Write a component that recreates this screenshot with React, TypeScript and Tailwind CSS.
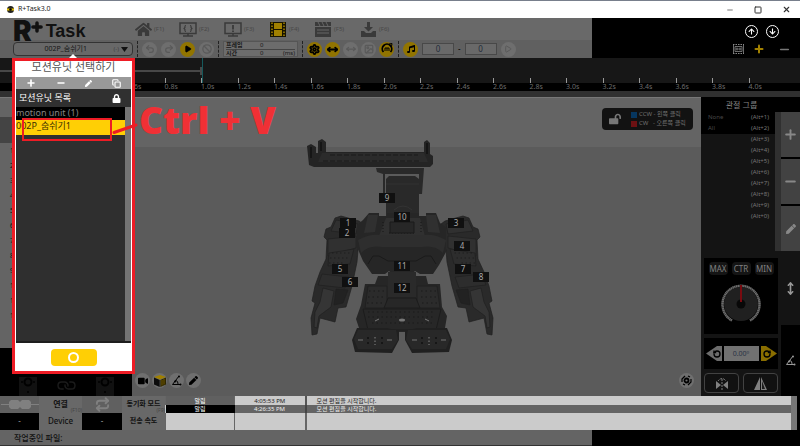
import { clsx } from 'clsx';
import type { ReactNode } from 'react';
import {
  Ban,
  Copy,
  Image as ImageIcon,
  Link as LinkIcon,
  Minus,
  MoveHorizontal,
  MoveVertical,
  Play,
  Plus,
  Redo2,
  Repeat,
  RotateCcw,
  RotateCw,
  Settings,
  Square,
  Undo2,
  X,
} from 'lucide-react';
import { FaArrowDown, FaArrowUp, FaHome, FaLock, FaLockOpen, FaMusic, FaPen, FaVideo } from 'react-icons/fa';

const ticks = [
  '0.6s', '0.8s', '1.0s', '1.2s', '1.4s', '1.6s', '1.8s', '2.0s', '2.2s',
  '2.4s', '2.6s', '2.8s', '3.0s', '3.2s', '3.4s', '3.6s', '3.8s', '4.0s',
];

const joints = [
  { id: 9, pos: 'left-[89px] top-[63px]' },
  { id: 10, pos: 'left-[104px] top-[82px]' },
  { id: 1, pos: 'left-[50px] top-[88px]' },
  { id: 2, pos: 'left-[49px] top-[98px]' },
  { id: 3, pos: 'left-[158px] top-[88px]' },
  { id: 4, pos: 'left-[164px] top-[111px]' },
  { id: 11, pos: 'left-[104px] top-[131px]' },
  { id: 5, pos: 'left-[42px] top-[134px]' },
  { id: 6, pos: 'left-[52px] top-[147px]' },
  { id: 7, pos: 'left-[165px] top-[134px]' },
  { id: 8, pos: 'left-[183px] top-[142px]' },
  { id: 12, pos: 'left-[104px] top-[153px]' },
];

const groups = [
  { name: 'None', keys: '(Alt+1)' },
  { name: 'All', keys: '(Alt+2)' },
  { name: '', keys: '(Alt+3)' },
  { name: '', keys: '(Alt+4)' },
  { name: '', keys: '(Alt+5)' },
  { name: '', keys: '(Alt+6)' },
  { name: '', keys: '(Alt+7)' },
  { name: '', keys: '(Alt+8)' },
  { name: '', keys: '(Alt+9)' },
  { name: '', keys: '(Alt+0)' },
];

function MonitorIcon({ mark }: { mark: 'code' | 'alert' }) {
  return (
    <svg width="18" height="15" viewBox="0 0 18 15" fill="none" stroke="#3a3a3a" strokeWidth="1.5">
      <rect x="1" y="1" width="16" height="10.5" />
      <path d="M9 11.5v2M4 14h10" />
      {mark === 'code' ? (
        <path d="M7 3.5c-1.5 0-1 1.5-1 2l-1 1 1 1c0 .5-.5 2 1 2M11 3.5c1.5 0 1 1.5 1 2l1 1-1 1c0 .5.5 2-1 2" strokeWidth="1.1" />
      ) : (
        <path d="M9 3v4.5M9 8.5v1.6" strokeWidth="1.8" />
      )}
    </svg>
  );
}

function FilmIcon() {
  return (
    <svg width="16" height="15" viewBox="0 0 16 15">
      <path d="M0 0h16v15H0z" fill="#161300" />
      <path d="M4 1h8v6H4zM4 8h8v6H4z" fill="#a08000" />
      <path d="M2 .5v14M14 .5v14" stroke="#a08000" strokeWidth="1.6" strokeDasharray="1.6 1.4" />
    </svg>
  );
}

function ClapIcon() {
  return (
    <svg width="16" height="15" viewBox="0 0 16 15">
      <path d="M0 5h16v10H0zM0 0h16v4H0z" fill="#3a3a3a" />
      <path d="M3 0l2 4M7 0l2 4M11 0l2 4M2 8h12M2 11h12" stroke="#666" strokeWidth="1" />
    </svg>
  );
}

function SaveIcon() {
  return (
    <svg width="15" height="15" viewBox="0 0 15 15" fill="#3a3a3a">
      <path d="M6 0h3v5h3L7.500 9.500 3 5h3zM0 9h3l2 2h5l2-2h3v6H0z" />
    </svg>
  );
}

function CubeIcon() {
  return (
    <svg width="12" height="12" viewBox="0 0 12 12">
      <path d="M6 0l6 2-6 2.500L0 2z" fill="#a08000" />
      <path d="M0 2.500L5.700 5v7L0 9.500z" fill="#0c0c0c" />
      <path d="M12 2.500L6.300 5v7L12 9.500z" fill="#2e2600" />
      <path d="M8 5v5.500M10 4v5.500" stroke="#8a6e00" strokeWidth=".7" />
    </svg>
  );
}

function AngleIcon({ className }: { className?: string }) {
  return (
    <svg className={className} width="11" height="11" viewBox="0 0 11 11" fill="none" stroke="currentColor">
      <path d="M8 1L1.500 9.500H10M5 5.500c1.500.5 2 2 2 4" />
      <circle cx="9.500" cy="9.500" r="1" fill="currentColor" stroke="none" />
      <circle cx="4" cy="6.500" r="1" fill="currentColor" stroke="none" />
      <circle cx="8" cy="1.500" r="1" fill="currentColor" stroke="none" />
    </svg>
  );
}

function ServoIcon() {
  return (
    <svg width="18" height="20" viewBox="0 0 18 20" fill="none" stroke="#000">
      <path d="M0 1h18v19H0z" fill="#111" stroke="none" />
      <circle cx="9" cy="6" r="3.500" strokeWidth="2" />
      <path d="M2 6h2M14 6h2M9 15v2" strokeWidth="1.500" />
    </svg>
  );
}

function RoundButton({ label, tone, children }: { label: string; tone: 'on' | 'off' | 'view'; children: ReactNode }) {
  return (
    <button
      aria-label={label}
      className={clsx('flex size-[15px] shrink-0 items-center justify-center rounded-full', {
        'bg-[#917400] text-black': tone === 'on',
        'bg-[#6e6e6e] text-[#5a5a5a]': tone === 'off',
        'bg-[#6f6f6f] text-black': tone === 'view',
      })}
    >
      {children}
    </button>
  );
}

function Dots() {
  return <span className="h-4 shrink-0 border-l border-dashed border-[#222]" />;
}

function TitleBar() {
  return (
    <header className="flex h-[18px] items-center border-t border-[#787f8c] bg-white px-[7px] text-[7px] text-[#222]">
      <svg width="7" height="7" viewBox="0 0 7 7">
        <circle cx="3.500" cy="3.500" r="3.500" fill="#222" />
        <path d="M0 3.500h7" stroke="#e6c200" strokeWidth="2" />
        <circle cx="3.500" cy="3.500" r="1.300" fill="#000" />
      </svg>
      <span className="ml-1">R+Task3.0</span>
      <div className="ml-auto flex items-center gap-5 pr-0.5 text-[#333]">
        <button aria-label="Minimize"><Minus size={8} strokeWidth={2} /></button>
        <button aria-label="Maximize"><Square size={8} strokeWidth={3} /></button>
        <button aria-label="Close"><X size={9} strokeWidth={3} /></button>
      </div>
    </header>
  );
}

function ModeButton({ hint, children }: { hint: string; children: ReactNode }) {
  return (
    <button className="flex w-[45px] items-center gap-0.5 text-[6px] text-[#484848]">
      <span className="flex w-[18px] justify-center">{children}</span>
      {hint}
    </button>
  );
}

function Toolbar() {
  return (
    <div className="flex">
      <div className="min-w-0 flex-1">
        <div className="flex h-[22px] items-center bg-[#696969]">
          <div className="flex w-[134px] items-center pt-1 pl-[13px] leading-none text-[#111]">
            <span className="font-[Inter] text-[28px] leading-5 font-black">R</span>
            <Plus className="-mt-2 -ml-0.5 shrink-0" size={14} strokeWidth={6} />
            <span className="ml-0.5 font-['Liberation_Sans'] text-[18px] font-bold">Task</span>
          </div>
          <nav className="flex">
            <ModeButton hint="(F1)"><FaHome size={17} color="#3a3a3a" /></ModeButton>
            <ModeButton hint="(F2)"><MonitorIcon mark="code" /></ModeButton>
            <ModeButton hint="(F3)"><MonitorIcon mark="alert" /></ModeButton>
            <ModeButton hint="(F4)"><FilmIcon /></ModeButton>
            <ModeButton hint="(F5)"><ClapIcon /></ModeButton>
            <ModeButton hint="(F6)"><SaveIcon /></ModeButton>
          </nav>
        </div>
        <div className="flex h-[18px] items-center gap-1 bg-[#606060] pl-[13px]">
          <button className="flex h-[14px] w-[120px] shrink-0 items-center rounded-sm border border-[#333] bg-[#686868] px-1 text-[7px] text-[#161616]">
            <span className="flex-1">002P_숨쉬기1</span>
            <span className="text-[6px] text-[#444]">(-)</span>
            <svg className="ml-0.5" width="7" height="5" viewBox="0 0 7 5"><path d="M0 0h7L3.500 5z" fill="#111" /></svg>
          </button>
          <Dots />
          <RoundButton label="Undo" tone="off"><Undo2 size={10} strokeWidth={3} /></RoundButton>
          <RoundButton label="Redo" tone="off"><Redo2 size={10} strokeWidth={3} /></RoundButton>
          <RoundButton label="Play" tone="on"><Play size={8} fill="black" /></RoundButton>
          <RoundButton label="Stop" tone="off"><Ban size={10} strokeWidth={3} /></RoundButton>
          <Dots />
          <dl className="grid h-4 w-[75px] shrink-0 grid-cols-[34px_1fr_auto] border border-[#555] bg-[#6c6c6c] px-0.5 text-[6px] leading-[7px] text-[#181818]">
            <dt className="font-bold">프레임</dt>
            <dd>0</dd>
            <dd />
            <dt className="border-t border-[#444] font-bold">시간</dt>
            <dd className="border-t border-[#444]">0</dd>
            <dd className="border-t border-[#444]">(ms)</dd>
          </dl>
          <Dots />
          <div className="flex gap-[3px]">
            <RoundButton label="Settings" tone="on"><Settings size={11} strokeWidth={4} /></RoundButton>
            <RoundButton label="Fit" tone="on"><MoveHorizontal size={11} strokeWidth={4} /></RoundButton>
            <RoundButton label="Mirror" tone="off"><MoveHorizontal size={10} strokeWidth={3} /></RoundButton>
            <RoundButton label="Picture" tone="off"><ImageIcon size={10} strokeWidth={3} /></RoundButton>
            <RoundButton label="Loop" tone="on">
              <svg width="12" height="12" viewBox="0 0 12 12" fill="none" stroke="black">
                <path d="M2.500 9A4.700 4.700 0 1 1 9.500 9" strokeWidth="1.800" />
                <path d="M8 1l3-.5-.5 3zM4 5v3M6 5v3M8 5v3M4 5h4" />
              </svg>
            </RoundButton>
          </div>
          <Dots />
          <RoundButton label="Music" tone="on"><FaMusic size={8} /></RoundButton>
          <input aria-label="Start" defaultValue="0" className="h-3 w-8 border border-[#484848] bg-[#696969] text-center text-[8px] text-[#222c3a]" />
          <span className="text-[8px] leading-none text-black">-</span>
          <input aria-label="End" defaultValue="0" className="h-3 w-8 border border-[#484848] bg-[#696969] text-center text-[8px] text-[#222c3a]" />
          <RoundButton label="Play music" tone="off"><Play size={8} strokeWidth={3} /></RoundButton>
        </div>
      </div>
      <div className="flex w-[208px] flex-col items-end justify-around bg-black pr-[9px]">
        <div className="flex gap-2 pr-3 pt-1 text-white">
          <button aria-label="Upload" className="flex size-[13px] items-center justify-center rounded-full border border-white"><FaArrowUp size={7} /></button>
          <button aria-label="Download" className="flex size-[13px] items-center justify-center rounded-full border border-white"><FaArrowDown size={7} /></button>
        </div>
        <div className="flex items-center gap-[9px]">
          <button aria-label="Frames">
            <svg width="11" height="10" viewBox="0 0 11 10" fill="none" stroke="#888">
              <path d="M0 .5h11M0 9.500h11" strokeDasharray="1.500 1" />
              <path d="M.5 0v10M10.500 0v10M2 2.500h7v5H2z" strokeWidth=".8" />
              <circle cx="4" cy="5" r="1" strokeWidth=".8" />
              <circle cx="7" cy="5" r="1" strokeWidth=".8" />
            </svg>
          </button>
          <button aria-label="Zoom in"><Plus size={12} strokeWidth={4} color="#a38200" /></button>
          <button aria-label="Zoom out" className="ml-1"><Minus size={13} strokeWidth={3} color="#777" /></button>
        </div>
      </div>
    </div>
  );
}

function Timeline() {
  return (
    <div className="border-b-[6px] border-[#303030] bg-black">
      <div className="flex h-[25px] bg-[#171717]">
        <div className="flex w-[203px] items-center border-r border-[#16595c]">
          <span className="h-0.5 flex-1 bg-[#484848]" />
          <span className="h-2 w-0.5 bg-[#484848]" />
        </div>
      </div>
      <ol className="-mt-[5px] flex pr-[15px] pl-[128px] text-[7px] leading-[8px] text-[#6c6c6c]">
        {ticks.map((tick) => (
          <li key={tick} className="flex-1">
            <span className="block h-[5px] w-px bg-[#999]" />
            {tick}
          </li>
        ))}
      </ol>
    </div>
  );
}

function Arm() {
  return (
    <g stroke="#202020" strokeWidth=".7">
      <path d="M335 218l6-2 18 5 4 3v14l-5 12-1 12-5 24-6 21-8 1-3 14-15-4-3 16-5 1-1-17 4-15-3-2 3-15 5-14 6-13 1-19-3-3 2-8 5-2z" fill="#2a2a2a" />
      <path d="M336 220l22 4-2 10-25-3zM328 239l28-3v12l-28 8z" fill="#303030" />
      <path d="M329 253l25-4-4 15-22 2zM322 274l27 3-4 11-27-3z" fill="#2d2d2d" />
      <path d="M323 288l11 3-3 16-12 9-2 12-3-1 1-15 5-10z" fill="#353535" />
      <path d="M336 289l12 1-5 13-9 2z" fill="#222" />
      <path d="M332 253h18M330 258h18M329 263h14" stroke="#181818" strokeDasharray="1.500 2.500" />
    </g>
  );
}

function Foot() {
  return (
    <g>
      <path d="M357 328l-5 12 3 12 37 1 7-13v-9l-12-3z" fill="#202020" />
      <path d="M354 339l4-9h38l2 10-6 9H358z" fill="#282828" />
      <path d="M358 340h5M387 340h5" stroke="#747474" />
      <path d="M368 337v8M382 337v7" stroke="#161616" strokeWidth="2" strokeDasharray="2 3" />
      <path d="M375 337v8" stroke="#858585" strokeDasharray="1.500 2" />
    </g>
  );
}

function Robot() {
  return (
    <svg width="220" height="230" viewBox="290 130 220 230">
      {/* phone tray */}
      <path d="M307 146l4-2 5 3v6h2v-12l4-2 4 3v10h98v-10l3-2 3 3v11l3 2v8l-3 3H314l-5-2z" fill="#242424" />
      <path d="M322 153h102l4 9H318z" fill="#2b2b2b" />
      <path d="M330 155h88M323 161h96" stroke="#1b1b1b" strokeDasharray="5 2" />
      <path d="M311 147v11M321 142v9M427 143v11" stroke="#151515" strokeWidth="2" />
      <path d="M376 168h48l-2 26h-3v-20h-34v28h-2v-28l-6-2z" fill="#292929" />
      {/* head */}
      <path d="M389 176h26l4 3v44h-33v-44z" fill="#292929" />
      <path d="M386 184h33M394 210q9-8 18 0" stroke="#333" fill="none" />
      {/* arms, one side drawn and flipped for the other */}
      <Arm />
      <g transform="translate(804 0) scale(-1 1)"><Arm /></g>
      {/* chest */}
      <path d="M369 213h10v3h8v-3h32v3h7v-3h10l4 10 6 4v25l-7 13-6 9h-13l-5-3-4 4h-18l-4-4-4 3h-13l-9-13-6-14v-22l6-5z" fill="#262626" />
      <path d="M368 215h10l-3 17-11 1zM426 215h10l4 18-12-1zM386 218h34l5 18h-46z" fill="#303030" />
      <path d="M358 240q11-6 22-5h44q11-1 22 5l-3 13q-8-8-21-6h-40q-13-2-21 6z" fill="#2e2e2e" />
      <path d="M368 264l5-8h6l9 5h28l9-5h6l5 8" stroke="#1a1a1a" fill="none" />
      <path d="M383 222v12M421 222v12M389 233h27" stroke="#141414" strokeDasharray="1 2" />
      <path d="M390 222h24v11h-24z" fill="#272727" stroke="#1b1b1b" />
      {/* waist and legs */}
      <path d="M378 276h48l2 8h12l2 23 5 9-2 12-4 4h-78l-4-4-3-9 5-14 4-21h10z" fill="#262626" />
      <path d="M388 272h28v25h-28z" fill="#2a2a2a" />
      <path d="M368 286h19v22h-22zM417 286h20l3 22h-23z" fill="#2b2b2b" stroke="#202020" />
      <path d="M388 298h28l4 10h-36zM363 309h78l-5 21h-68z" fill="#272727" stroke="#1c1c1c" />
      <path d="M369 291h15M368 297h15M367 303h15M421 291h15M421 297h16M422 303h16M368 312h67M368 317h67M372 323h60" stroke="#1b1b1b" strokeDasharray="1.500 3" />
      <ellipse cx="402" cy="320" rx="3" ry="1.500" fill="#777" />
      <path d="M375 321l4-2M425 319l4 2" stroke="#777" />
      <Foot />
      <g transform="translate(804 0) scale(-1 1)"><Foot /></g>
    </svg>
  );
}

function Viewport() {
  return (
    <section className="relative flex min-w-0 flex-1 flex-col bg-[#5b5b5b]">
      <div className="flex h-[50px] items-start justify-end border-t border-[#777] bg-[#646464] pt-2.5 pr-2">
        <div className="flex h-[22px] w-[91px] items-center gap-2.5 rounded-sm bg-[#121212] pl-[7px] text-[6px] leading-[9px] text-[#707070]">
          <FaLockOpen size={12} color="#777" />
          <ul>
            <li className="flex items-center gap-0.5 whitespace-nowrap"><span className="size-1.5 bg-[#06365f]" />CCW - 왼쪽 클릭</li>
            <li className="flex items-center gap-0.5 whitespace-nowrap"><span className="size-1.5 bg-[#6c1113]" />CW &nbsp; - 오른쪽 클릭</li>
          </ul>
        </div>
      </div>
      <div className="absolute top-[33px] left-[158px]">
        <Robot />
        {joints.map((joint) => (
          <span key={joint.id} className={clsx('absolute h-[10px] w-4 bg-[#101010] text-center text-[8px] leading-[10px] text-[#aaa]', joint.pos)}>
            {joint.id}
          </span>
        ))}
      </div>
      <div className="mt-auto flex gap-0.5 px-[3px] pb-2">
        <RoundButton label="Camera" tone="view"><FaVideo size={10} /></RoundButton>
        <RoundButton label="Cube" tone="view"><CubeIcon /></RoundButton>
        <RoundButton label="Angle" tone="view"><AngleIcon /></RoundButton>
        <RoundButton label="Edit" tone="view"><FaPen size={9} /></RoundButton>
        <div className="ml-auto pr-1">
          <RoundButton label="Rotate view" tone="view">
            <svg width="11" height="11" viewBox="0 0 11 11" fill="none" stroke="black">
              <circle cx="5.500" cy="5.500" r="2" strokeWidth="1.800" />
              <path d="M1 7V4l3-3M10 4v3l-3 3M7 1l2 1M2 9l2 1" strokeWidth="1.200" />
            </svg>
          </RoundButton>
        </div>
      </div>
    </section>
  );
}

function LeftColumn() {
  return (
    <aside className="flex w-[132px] shrink-0 flex-col bg-[#646464]">
      <div className="h-5 border-t border-[#777]" />
      <div className="h-[26px] bg-[#444]" />
      <ol className="flex-1 pl-2.5 text-[7px] leading-[15px] text-[#111]">
        {Array.from({ length: 12 }, (_, i) => <li key={i}>{i + 1}</li>)}
      </ol>
      <div className="flex h-12 items-end justify-around bg-black px-2">
        <ServoIcon />
        <LinkIcon className="mb-0.5 rotate-45" size={17} color="#1b1b1b" />
        <ServoIcon />
      </div>
    </aside>
  );
}

function Dial() {
  return (
    <svg width="42" height="42" viewBox="0 0 42 42" fill="none">
      <path d="M12 37.500A18.500 18.500 0 1 1 30 37.500" stroke="#6c6c6c" strokeWidth="2.500" strokeDasharray="1.500 .3" />
      <circle cx="21" cy="21" r="17" fill="#202020" />
      <circle cx="21" cy="21" r="4.500" fill="#080808" />
      <path d="M21 2v17" stroke="#790b10" strokeWidth="2" />
    </svg>
  );
}

function RightColumn() {
  const side = 'flex flex-1 items-center justify-center bg-[#424242] text-[#888]';
  return (
    <aside className="flex w-[99px] shrink-0 flex-col bg-black">
      <h2 className="h-[15px] w-[81px] text-center text-[8px] leading-[15px] text-[#858585]">관절 그룹</h2>
      <div className="flex h-[139px]">
        <ul className="flex-1 bg-[#141414] text-[6px] leading-[11px] text-[#555]">
          {groups.map((g) => (
            <li key={g.keys} className={clsx('flex justify-between pr-1.5 pl-[7px]', g.name && 'bg-black text-[#484848]')}>
              <span>{g.name}</span>
              <span className="text-[#747474]">{g.keys}</span>
            </li>
          ))}
        </ul>
        <span className="w-1.5 bg-[#303030]" />
        <div className="flex w-[19px] flex-col gap-0.5">
          <button aria-label="Add group" className={side}><Plus size={15} strokeWidth={3} /></button>
          <button aria-label="Remove group" className={side}><Minus size={15} strokeWidth={3} /></button>
          <button aria-label="Edit group" className={side}><FaPen size={10} /></button>
        </div>
      </div>
      <div className="flex flex-1">
        <div className="flex flex-1 flex-col gap-1 bg-[#141414] px-[3px] pt-[7px] pb-[3px]">
          <div className="flex h-[76px] flex-col items-center gap-2 bg-black pt-1">
            <div className="flex gap-1 text-[8px] leading-[13px] text-[#808080]">
              <button className="w-[19px] rounded-sm bg-[#151515]">MAX</button>
              <button className="w-[19px] rounded-sm bg-[#151515]">CTR</button>
              <button className="w-[19px] rounded-sm bg-[#151515]">MIN</button>
            </div>
            <Dial />
          </div>
          <div className="flex flex-1 items-center justify-center gap-0.5 bg-black">
            <button aria-label="Turn left" className="relative flex">
              <svg width="16" height="15" viewBox="0 0 16 15"><path d="M0 7.500L11 0h5v15h-5z" fill="#6c6c6c" /></svg>
              <RotateCcw className="absolute top-1 left-[7px]" size={8} strokeWidth={4} color="black" />
            </button>
            <input aria-label="Angle" defaultValue="0.00º" className="h-[15px] w-[35px] bg-[#717171] text-center text-[7px] text-[#2a3145]" />
            <button aria-label="Turn right" className="relative flex">
              <svg width="16" height="15" viewBox="0 0 16 15"><path d="M16 7.500L5 0H0v15h5z" fill="#8a6e00" /></svg>
              <RotateCw className="absolute top-1 left-0.5" size={8} strokeWidth={4} color="black" />
            </button>
          </div>
          <div className="flex h-5 gap-1">
            <button aria-label="Swap" className="grid flex-1 place-items-center rounded-sm border border-[#424242] bg-[#111]">
              <svg width="14" height="13" viewBox="0 0 14 13" fill="#808080">
                <path d="M1 4l5 4-5 4zM13 4L8 8l5 4z" />
                <path d="M3 4q4-5 8 0M7 2v11" fill="none" stroke="#808080" strokeDasharray="2 1" />
              </svg>
            </button>
            <button aria-label="Mirror pose" className="grid flex-1 place-items-center rounded-sm border border-[#424242] bg-[#111]">
              <svg width="13" height="13" viewBox="0 0 13 13">
                <path d="M6 0v13H0zM7 0l6 13H7z" fill="#808080" />
                <path d="M8 4l3 8H8z" fill="#1c1c1c" />
              </svg>
            </button>
          </div>
        </div>
        <div className="flex w-[19px] flex-col">
          <button aria-label="Move" className="grid h-[74px] place-items-center bg-[#141414]"><MoveVertical size={13} strokeWidth={3} color="#999" /></button>
          <button aria-label="Angle mode" className="grid flex-1 place-items-center text-[#999]"><AngleIcon /></button>
        </div>
      </div>
    </aside>
  );
}

function StatusPanel() {
  return (
    <footer>
      <div className="flex h-[34px]">
        <div className="grid w-[165px] shrink-0 grid-cols-[39px_43px_40px_43px] grid-rows-2 bg-[#686868] text-center text-[8px] leading-4 text-[#111]">
          <span className="flex items-center justify-center bg-[#606060]">
            <svg width="38" height="9" viewBox="0 0 38 9" fill="#808080"><path d="M0 4h38v1H0zM10 0h7l2 2 2-2h7l2 2v5l-2 2h-7l-2-2-2 2h-7L8 7V2z" /></svg>
          </span>
          <span className="relative font-bold">연결<small className="absolute right-0 bottom-0 text-[5px] leading-[6px] font-normal text-[#444]">(F10)</small></span>
          <span className="flex items-center justify-center bg-[#606060]"><Repeat size={15} strokeWidth={3} color="#808080" /></span>
          <span className="relative text-[7px] font-bold">동기화 모드<small className="absolute right-0 bottom-0 text-[5px] leading-[6px] font-normal text-[#444]">(F9)</small></span>
          <span className="bg-black text-[#999]">-</span>
          <span className="font-medium">Device</span>
          <span className="bg-black text-[#999]">-</span>
          <span className="text-[7px] font-bold">전송 속도</span>
        </div>
        <div className="flex flex-1 bg-[#cbcbcb]">
          <table className="h-full flex-1 table-fixed border-collapse text-[6px] leading-2 text-[#222]">
            <tbody>
              <tr className="h-[9px]">
                <td className="w-[69px] border-x border-[#666] bg-[#606060] p-0 text-center text-white">알림</td>
                <td className="w-[71px] border-r-2 border-[#555] p-0 text-center">4:05:53 PM</td>
                <td className="p-0 pl-2.5">모션 편집을 시작합니다.</td>
              </tr>
              <tr className="h-2 bg-[#646464] text-[#eee]">
                <td className="bg-black p-0 text-center text-white">알림</td>
                <td className="border-r-2 border-[#444] p-0 text-center">4:26:35 PM</td>
                <td className="p-0 pl-2.5">모션 편집을 시작합니다.</td>
              </tr>
              <tr>
                <td className="border-x border-[#666]" />
                <td className="border-r-2 border-[#666]" />
                <td />
              </tr>
            </tbody>
          </table>
          <span className="w-1.5 bg-[#777]" />
          <span className="w-[3px] bg-black" />
        </div>
      </div>
      <div className="flex h-4 bg-black">
        <p className="flex-1 border-b border-[#333] bg-[#646464] pl-[14px] text-[8px] leading-[15px] font-medium text-[#111]">작업중인 파일:</p>
        <span className="w-[208px]" />
      </div>
    </footer>
  );
}

function UnitDialog() {
  return (
    <div role="dialog" aria-labelledby="unit-title" className="absolute top-[58px] left-3 flex h-[316px] w-[123px] flex-col border-[3px] border-[#ee1c25] bg-white px-px">
      <svg className="absolute -top-[7px] left-[54px]" width="8" height="4" viewBox="0 0 8 4"><path d="M4 0l4 4H0z" fill="white" /></svg>
      <h1 id="unit-title" className="h-4 text-center text-[11px] leading-[12px] text-[#555]">모션유닛 선택하기</h1>
      <div className="flex h-3 items-center justify-around bg-[#999] text-white">
        <button aria-label="Add"><Plus size={10} strokeWidth={4} /></button>
        <button aria-label="Remove"><Minus size={10} strokeWidth={4} /></button>
        <button aria-label="Rename"><FaPen size={7} /></button>
        <button aria-label="Copy"><Copy size={9} strokeWidth={3} /></button>
      </div>
      <div className="flex h-[18px] items-center justify-between bg-[#303030] pr-2.5 pl-[3px] text-[9px] text-white">
        모션유닛 목록
        <FaLock size={9} />
      </div>
      <div className="flex flex-1 border-b-2 border-[#1d1d1d]">
        <ul className="flex-1 bg-[#2f2f2f] text-[9px] leading-[11px]">
          <li className="h-[13px] bg-black text-[#858585]">motion unit (1)</li>
          <li className="h-[15px] bg-[#ffcf05] text-[#3b3000]">002P_숨쉬기1</li>
        </ul>
        <span className="w-1.5 bg-[#747474]" />
      </div>
      <div className="flex h-7 items-center justify-center">
        <button aria-label="OK" className="flex h-[17px] w-[46px] items-center justify-center rounded-sm bg-[#ffcf05]">
          <span className="size-[11px] rounded-full border-2 border-white" />
        </button>
      </div>
    </div>
  );
}

function PasteNote() {
  return (
    <>
      <span className="absolute top-[118px] left-[22px] h-[23px] w-[90px] border-2 border-[#ee1c25]" />
      <svg className="absolute top-[120px] left-[110px]" width="30" height="16" viewBox="0 0 30 16">
        <path d="M4 12.500L26 5" stroke="#ee1c25" strokeWidth="3" strokeLinecap="round" />
      </svg>
      <p className="absolute top-[100px] left-[139px] font-['Open_Sans'] text-[37px] leading-10 font-extrabold whitespace-nowrap text-[#f03035]">Ctrl + V</p>
    </>
  );
}

export default function App() {
  return (
    <div className="relative flex min-h-screen flex-col overflow-hidden bg-black font-['Noto_Sans','Noto_Sans_CJK_KR',sans-serif]">
      <TitleBar />
      <Toolbar />
      <Timeline />
      <main className="flex flex-1">
        <LeftColumn />
        <Viewport />
        <RightColumn />
      </main>
      <StatusPanel />
      <UnitDialog />
      <PasteNote />
    </div>
  );
}
